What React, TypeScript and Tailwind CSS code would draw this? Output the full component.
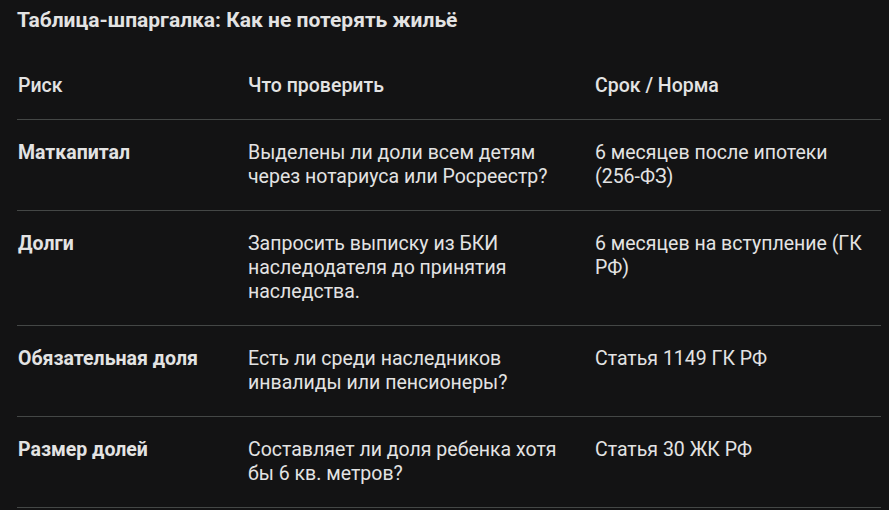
import React from 'react';

const rows = [
  {
    risk: 'Маткапитал',
    check: 'Выделены ли доли всем детям через нотариуса или Росреестр?',
    term: <>6 месяцев после ипотеки <span className="whitespace-nowrap">(256-ФЗ)</span></>,
  },
  {
    risk: 'Долги',
    check: 'Запросить выписку из БКИ наследодателя до принятия наследства.',
    term: '6 месяцев на вступление (ГК РФ)',
  },
  {
    risk: 'Обязательная доля',
    check: 'Есть ли среди наследников инвалиды или пенсионеры?',
    term: 'Статья 1149 ГК РФ',
  },
  {
    risk: 'Размер долей',
    check: 'Составляет ли доля ребенка хотя бы 6 кв. метров?',
    term: 'Статья 30 ЖК РФ',
  },
];

export default function App() {
  return (
    <main
      className="min-h-screen bg-[#131314] text-[#e3e3e3] pl-[17px] pr-2 pt-2"
      style={{ fontFamily: 'Roboto, "Noto Sans", sans-serif' }}
    >
      <h1 className="text-[21px] leading-6 font-bold mb-[21px]">Таблица-шпаргалка: Как не потерять жильё</h1>

      <table className="w-full border-collapse text-[19.5px] leading-6">
        <thead>
          <tr className="border-b border-[#444746]">
            <th className="w-[231px] text-left font-medium py-[21px] pl-px">Риск</th>
            <th className="w-[347px] text-left font-medium py-[21px] pr-5">Что проверить</th>
            <th className="text-left font-medium py-[21px]">Срок / Норма</th>
          </tr>
        </thead>
        <tbody>
          {rows.map(r => (
            <tr key={r.risk} className="border-b border-[#444746] align-top">
              <td className="font-bold py-[21px] pl-px pr-4">{r.risk}</td>
              <td className="py-[21px] pr-5">{r.check}</td>
              <td className="py-[21px]">{r.term}</td>
            </tr>
          ))}
        </tbody>
      </table>
    </main>
  );
}
